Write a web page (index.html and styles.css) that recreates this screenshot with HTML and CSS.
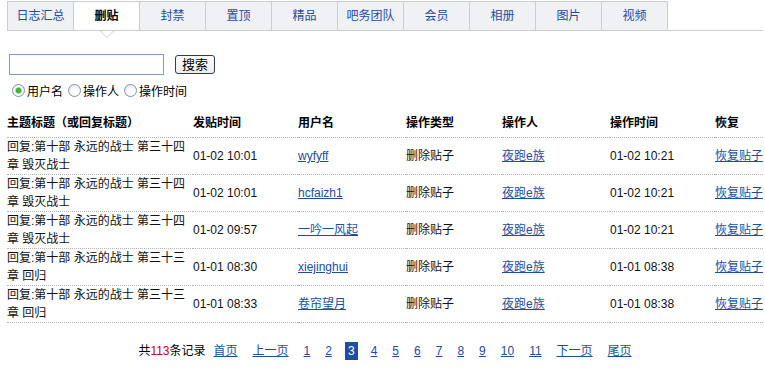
FILE: index.html
```html
<!DOCTYPE html>
<html lang="zh-CN">
<head>
  <meta charset="utf-8">
  <title>删贴日志</title>
  <link rel="stylesheet" href="styles.css">
</head>
<body>
  <div class="page">
    <!-- Tabs -->
    <ul class="tabs">
      <li><a href="#">日志汇总</a></li>
      <li class="active"><a href="#">删贴</a></li>
      <li><a href="#">封禁</a></li>
      <li><a href="#">置顶</a></li>
      <li><a href="#">精品</a></li>
      <li><a href="#">吧务团队</a></li>
      <li><a href="#">会员</a></li>
      <li><a href="#">相册</a></li>
      <li><a href="#">图片</a></li>
      <li><a href="#">视频</a></li>
    </ul>

    <!-- Search -->
    <form class="search">
      <div class="search-row">
        <input type="text" class="search-input">
        <button type="button" class="search-btn">搜索</button>
      </div>
      <div class="radio-row">
        <label><input type="radio" name="by" checked>用户名</label>
        <label><input type="radio" name="by">操作人</label>
        <label><input type="radio" name="by">操作时间</label>
      </div>
    </form>

    <!-- Log table -->
    <table class="log">
      <colgroup>
        <col style="width:186px"><col style="width:105px"><col style="width:108px">
        <col style="width:96px"><col style="width:108px"><col style="width:105px"><col>
      </colgroup>
      <thead>
        <tr>
          <th>主题标题（或回复标题）</th><th>发贴时间</th><th>用户名</th>
          <th>操作类型</th><th>操作人</th><th>操作时间</th><th>恢复</th>
        </tr>
      </thead>
      <tbody>
        <tr>
          <td>回复:第十部 永远的战士 第三十四章 毁灭战士</td><td>01-02 10:01</td><td><a href="#">wyfyff</a></td>
          <td>删除贴子</td><td><a href="#">夜跑e族</a></td><td>01-02 10:21</td><td><a href="#">恢复贴子</a></td>
        </tr>
        <tr>
          <td>回复:第十部 永远的战士 第三十四章 毁灭战士</td><td>01-02 10:01</td><td><a href="#">hcfaizh1</a></td>
          <td>删除贴子</td><td><a href="#">夜跑e族</a></td><td>01-02 10:21</td><td><a href="#">恢复贴子</a></td>
        </tr>
        <tr>
          <td>回复:第十部 永远的战士 第三十四章 毁灭战士</td><td>01-02 09:57</td><td><a href="#">一吟一风起</a></td>
          <td>删除贴子</td><td><a href="#">夜跑e族</a></td><td>01-02 10:21</td><td><a href="#">恢复贴子</a></td>
        </tr>
        <tr>
          <td>回复:第十部 永远的战士 第三十三章 回归</td><td>01-01 08:30</td><td><a href="#">xiejinghui</a></td>
          <td>删除贴子</td><td><a href="#">夜跑e族</a></td><td>01-01 08:38</td><td><a href="#">恢复贴子</a></td>
        </tr>
        <tr>
          <td>回复:第十部 永远的战士 第三十三章 回归</td><td>01-01 08:33</td><td><a href="#">卷帘望月</a></td>
          <td>删除贴子</td><td><a href="#">夜跑e族</a></td><td>01-01 08:38</td><td><a href="#">恢复贴子</a></td>
        </tr>
      </tbody>
    </table>

    <!-- Pager -->
    <div class="pager">
      <span class="count">共<em>113</em>条记录</span>
      <a href="#">首页</a>
      <a href="#">上一页</a>
      <a href="#">1</a>
      <a href="#">2</a>
      <span class="current">3</span>
      <a href="#">4</a>
      <a href="#">5</a>
      <a href="#">6</a>
      <a href="#">7</a>
      <a href="#">8</a>
      <a href="#">9</a>
      <a href="#">10</a>
      <a href="#">11</a>
      <a href="#">下一页</a>
      <a href="#">尾页</a>
    </div>
  </div>
</body>
</html>
```

FILE: styles.css
```css
:root {
  --link: #1d4d9e;
  --tab-bg: #eff1f4;
  --line: #cbcdd0;
  --font: "Liberation Sans", "Noto Sans CJK SC", sans-serif;
}
*, *::before, *::after { box-sizing: border-box; }
body { margin: 0; background: #fff; color: #000; font-family: var(--font); font-size: 12px; }
a { color: var(--link); }
.page { padding: 1px 2px 0 7px; }

/* tabs */
.tabs { display: flex; margin: 0; padding: 0; list-style: none; border-bottom: 1px solid var(--line); position: relative; }
.tabs li { width: 67px; height: 29px; border: 1px solid var(--line); border-bottom: none; margin-right: -1px; background: var(--tab-bg); text-align: center; line-height: 28px; position: relative; }
.tabs li a { color: var(--link); text-decoration: none; }
.tabs li.active { background: #fff; }
.tabs li.active a { color: #000; font-weight: bold; }
.tabs li.active::before,
.tabs li.active::after { content: ""; position: absolute; left: 50%; border-style: solid; border-color: transparent; }
.tabs li.active::before { top: 29px; margin-left: -7px; border-width: 7px 7px 0; border-top-color: var(--line); }
.tabs li.active::after { top: 29px; margin-left: -6px; border-width: 6px 6px 0; border-top-color: #fff; }

/* search */
.search { margin-top: 23px; }
.search-row { display: flex; align-items: center; }
.search-input { width: 155px; height: 21px; margin: 0 0 0 2px; border: 1px solid #7f9db9; padding: 1px 3px; font: inherit; }
.search-btn { margin-left: 11px; width: 40px; height: 19px; padding: 0; border: 1px solid #2a3d5c; border-radius: 3px; background: linear-gradient(#fefefe, #ecebe6); font-family: var(--font); font-size: 13px; line-height: 16px; color: #000; }
.radio-row { display: flex; margin-top: 7px; padding-left: 5px; height: 16px; align-items: center; }
.radio-row label { display: flex; align-items: center; margin-right: 5px; }
.radio-row input { appearance: none; width: 13px; height: 13px; margin: 0 2px 0 0; border: 1px solid #7b95b3; border-radius: 50%; background: radial-gradient(circle at 60% 65%, #fff 30%, #dcdcd6 100%); }
.radio-row input:checked { background: radial-gradient(circle, #3fb53f 0 2.5px, #a6dba0 3px, #fff 4px, #e4e4de 100%); }

/* table */
.log { width: 756px; margin-top: 12px; border-collapse: collapse; table-layout: fixed; }
.log th, .log td { padding: 0; text-align: left; vertical-align: middle; line-height: 18px; border-bottom: 1px dotted #b5b5b5; }
.log th { padding: 4px 0 5px; font-weight: bold; }
.log td { color: #111; }

/* pager */
.pager { display: flex; justify-content: center; align-items: center; gap: 15px; margin-top: 19px; line-height: 18px; }
.pager .count em { font-style: normal; color: #c00; }
.pager .count { margin-right: -7px; }
.pager .current { background: #1c4fa3; color: #fff; padding: 0 3px; margin: 0 -2px; }
```
